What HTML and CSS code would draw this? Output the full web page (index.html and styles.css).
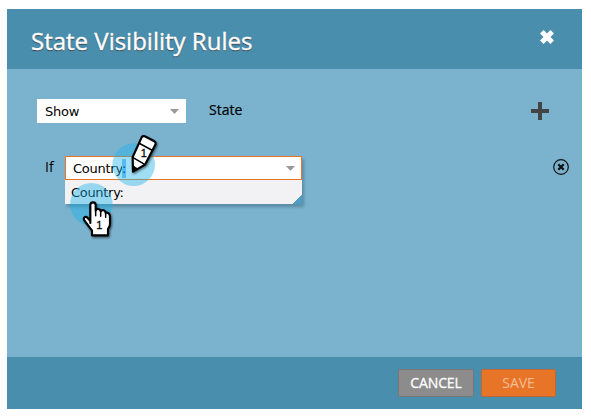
FILE: index.html
```html
<!DOCTYPE html>
<html lang="en">
<head>
<meta charset="utf-8">
<title>State Visibility Rules</title>
<link rel="stylesheet" href="styles.css">
</head>
<body>
<section class="dialog">
  <header class="header">
    <h1 class="title">State Visibility Rules</h1>
    <svg class="close" width="14" height="14" viewBox="0 0 14 14"><path d="M1.8 1.8 12.2 12.2M12.2 1.8 1.8 12.2"/></svg>
  </header>
  <main class="content">
    <div class="row">
      <div class="select"><span>Show</span><svg class="arrow" width="9" height="5" viewBox="0 0 9 5"><path d="M0 0H9L5 4.5H4Z"/></svg></div>
      <span class="field">State</span>
      <svg class="plus" width="18" height="18" viewBox="0 0 18 18"><path d="M9 0V18M0 9H18"/></svg>
    </div>
    <div class="row condition">
      <span class="if">If</span>
      <div class="combo">
        <div class="select focused"><span>Country<mark>:</mark></span><svg class="arrow" width="9" height="5" viewBox="0 0 9 5"><path d="M0 0H9L5 4.5H4Z"/></svg></div>
        <div class="option">Country:</div>
        <svg class="marker" width="150" height="115" viewBox="0 0 450 345">
          <circle class="halo" cx="169" cy="223" r="64"/>
          <circle class="halo" cx="296" cy="104" r="64"/>
          <g class="drawing">
            <path d="M320 22Q323 16 329 19L358 34Q364 38 361 44L330 104L294 125L293 81Z"/>
            <path class="thin" d="M311 39 350 60M293 82 329 103"/>
            <path class="lead" d="M293 106 309 117 294 125Z"/>
          </g>
          <text x="317" y="80">1</text>
          <g class="drawing">
            <path d="M166 279V226Q166 217 174 217Q182 217 182 226V242Q184 236 190 237Q197 238 197 244Q200 239 206 241Q212 243 212 249Q216 246 221 250Q225 254 225 260V282Q225 290 219 297V316H171V302L148 271Q144 264 150 261Q155 259 159 265L166 273"/>
            <path class="thin" d="M182 240V257M197 244V259M212 249V262"/>
          </g>
          <text x="184" y="298">1</text>
        </svg>
      </div>
      <svg class="remove" width="16" height="16" viewBox="0 0 16 16"><circle cx="8" cy="8" r="7.3"/><path d="M5.3 5.3 10.7 10.7M10.7 5.3 5.3 10.7"/></svg>
    </div>
  </main>
  <footer class="footer">
    <button class="button">CANCEL</button>
    <button class="button save">SAVE</button>
  </footer>
</section>
</body>
</html>
```
FILE: styles.css
```css
* { box-sizing: border-box; }
body { margin: 0; background: #fff; color: #000; font: 13px "DejaVu Sans", sans-serif; }
.dialog { display: flex; flex-direction: column; width: 575px; height: 400px; margin: 9px 0 0 7px; background: #7bb3cf; }
.header { display: flex; align-items: center; justify-content: space-between; height: 60px; padding: 0 28px 0 24px; background: #4a8eae; }
.title { margin: 4px 0 0; color: #fff; font: 400 24px/32px "Open Sans", sans-serif; -webkit-text-stroke: .4px #fff; text-shadow: 0 1px 1px #333; }
.close { margin-top: -5px; }
.close path { stroke: #fff; stroke-width: 5; }
.content { flex: 1; padding: 30px 13px 0 30px; }
.row { display: flex; height: 24px; }
.select { display: flex; align-items: center; justify-content: space-between; width: 149px; height: 24px; padding: 0 7px 0 8px; background: #fff; letter-spacing: -.25px; }
.arrow { fill: #999; }
.field { margin-left: 23px; font: 14px/22px "Open Sans", sans-serif; -webkit-text-stroke: .2px #000; }
.plus { margin: 3px 20px 0 auto; }
.plus path { stroke: #444; stroke-width: 4; fill: none; }
.condition { margin-top: 33px; padding-left: 8px; }
.if { width: 20px; font: 14px/22px "Open Sans", sans-serif; }
.combo { position: relative; width: 237px; height: 48px; box-shadow: 2px 3px 3px #5c8ba5; }
.focused { width: 237px; border: 1px solid #e87527; padding: 0 6px 0 7px; }
mark { color: inherit; background: #80c3ff; padding: 2px 0; }
.option { height: 24px; padding-left: 6px; line-height: 25px; letter-spacing: -.3px; background: linear-gradient(135deg, transparent 50%, #4f9dc3 0) right bottom / 10px 10px no-repeat, #f2f2f4; }
.marker { position: absolute; left: -30px; top: -26px; }
.halo { fill: #1bb0e6; fill-opacity: .42; }
.drawing { fill: #fff; stroke: #000; stroke-width: 6.5; stroke-linejoin: round; stroke-linecap: round; filter: drop-shadow(3px 4px 3px #0008); }
.thin { stroke-width: 4.5; fill: none; }
.lead { fill: #000; stroke-width: 2; }
.marker text { font: 33px "Liberation Sans", sans-serif; stroke: #000; stroke-width: .8; }
.remove { margin-left: auto; margin-top: 3px; fill: none; stroke: #111; }
.remove circle { stroke-width: 1.2; }
.remove path { stroke-width: 2.3; }
.footer { display: flex; gap: 7px; justify-content: flex-end; height: 52px; padding: 12px 26px; background: #4a8eae; }
.button { width: 76px; height: 28px; padding: 0; border: 1px solid #777; border-radius: 2px; background: #8c8c8c; color: #fff; font: 14px/26px "Open Sans", sans-serif; letter-spacing: -.1px; -webkit-text-stroke: .3px currentColor; }
.save { width: 75px; border-color: #b76a38; background: #e87527; color: #f6bd96; -webkit-text-stroke-width: 0; }
```
